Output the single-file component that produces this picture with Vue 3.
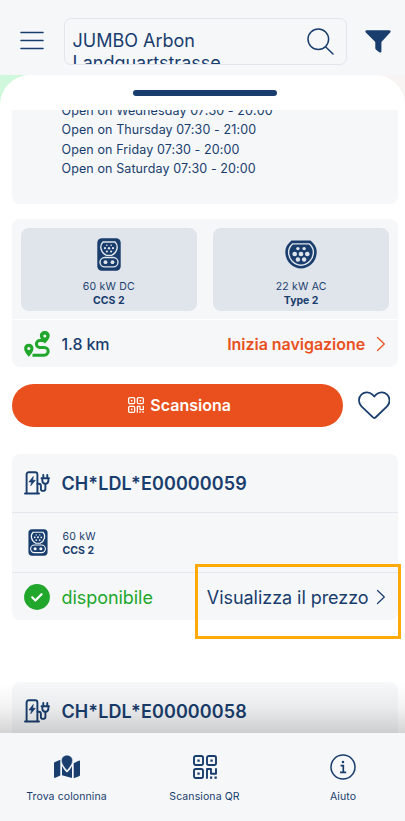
<template>
  <div class="app">
    <svg class="sprite" aria-hidden="true">
      <symbol id="ccs" viewBox="0 0 24 33">
        <rect x="0.3" y="0.3" width="23.400" height="32.400" rx="4.500" fill="#193d6d" />
        <path d="M6 4h12c2 2 2.600 4.500 1.900 7-.7 2.800-2.400 5-5.300 6.400H9.400C6.500 16 4.800 13.800 4.100 11 3.400 8.500 4 6 6 4z" fill="none" stroke="var(--cut)" stroke-width="1.400" />
        <rect x="3" y="19.500" width="18" height="9.400" rx="4.700" fill="none" stroke="var(--cut)" stroke-width="1.400" />
        <g fill="var(--cut)">
          <circle cx="9.800" cy="7.200" r=".8" /><circle cx="14.200" cy="7.200" r=".8" />
          <circle cx="8" cy="10.200" r="1.100" /><circle cx="12" cy="10.200" r="1.200" /><circle cx="16" cy="10.200" r="1.100" />
          <circle cx="9.900" cy="13.500" r="1.100" /><circle cx="14.100" cy="13.500" r="1.100" />
          <circle cx="8.500" cy="24.200" r="1.900" /><circle cx="15.500" cy="24.200" r="1.900" />
        </g>
      </symbol>
      <symbol id="type2" viewBox="0 0 32 29">
        <path d="M6.500.6h19c3.500 3 6.200 6.800 6.200 11.400C31.700 21 24.600 28.500 16 28.500S.3 21 .3 12C.3 7.400 3 3.600 6.500.6z" fill="#193d6d" />
        <path d="M7.500 3.900h17c2.300 2.200 3.900 5 3.900 8.100 0 7.200-5.500 13.200-12.400 13.200S3.600 19.200 3.600 12c0-3.100 1.600-5.900 3.900-8.100z" fill="none" stroke="var(--cut)" stroke-width="1.400" />
        <g fill="var(--cut)">
          <circle cx="12.900" cy="8.600" r="1.700" /><circle cx="19.100" cy="8.600" r="1.700" />
          <circle cx="9.700" cy="14" r="2.300" /><circle cx="16" cy="14" r="2.300" /><circle cx="22.300" cy="14" r="2.300" />
          <circle cx="12.900" cy="19.500" r="2.200" /><circle cx="19.100" cy="19.500" r="2.200" />
        </g>
      </symbol>
      <symbol id="station" viewBox="0 0 26 24">
        <g fill="none" stroke="currentColor" stroke-width="1.900" stroke-linecap="round" stroke-linejoin="round">
          <path d="M1 22.500h14M2.600 22V3.500c0-1.400.8-2.200 2.200-2.200h6.400c1.400 0 2.200.8 2.200 2.200V22" />
          <path d="M13.500 12.700h1.300c1.400 0 2.100.8 2.100 2.200v2.800c0 1.400.8 2.200 2 2.200s2.500-.8 2.500-2.200v-4.500" />
          <path d="M17.500 7.300h7.500M18.300 7.500v1.800c0 2.200 1.200 3.500 3.100 3.500s3-1.300 3-3.500V7.500M19.300 6.500V4M23.300 6.500V4" />
        </g>
        <path d="M9.300 5.400 4.900 11h2.700l-.9 3.800 4.700-5.500H8.700z" fill="currentColor" stroke="currentColor" stroke-width=".6" />
      </symbol>
      <symbol id="qr" viewBox="0 0 24 24">
        <g fill="none" stroke="currentColor" stroke-width="1.900" stroke-linejoin="round">
          <rect x="1" y="1" width="9" height="9" rx="1.800" />
          <rect x="14" y="1" width="9" height="9" rx="1.800" />
          <rect x="1" y="14" width="9" height="9" rx="1.800" />
          <path d="M14 23.800V14h4v4.800h5V13.200" />
        </g>
        <path d="M4.400 4.400h2.300v2.300H4.400zM17.400 4.400h2.300v2.300h-2.300zM4.400 17.400h2.300v2.300H4.400zM17 21.500h2.200v2.200H17zM21.500 21.500h2.300v2.200h-2.300z" fill="currentColor" />
      </symbol>
      <symbol id="chevron" viewBox="0 0 10 16">
        <path d="M1.500 1.500 8.300 8l-6.800 6.500" fill="none" stroke="currentColor" stroke-width="1.200" stroke-linecap="round" stroke-linejoin="round" />
      </symbol>
    </svg>

    <header class="topbar">
      <svg class="menu" viewBox="0 0 24 20">
        <path d="M1 1.500h22M1 9.500h22M1 17.500h22" fill="none" stroke="currentColor" stroke-width="1.500" stroke-linecap="round" />
      </svg>
      <div class="search">
        <div class="query"><span>JUMBO Arbon</span><br><span>Landquartstrasse</span></div>
        <svg class="lens" viewBox="0 0 28 28">
          <path d="M18.300 18.500 26 26M21.600 11.300a10.300 10.300 0 1 1-20.600 0 10.300 10.300 0 0 1 20.600 0z" fill="none" stroke="currentColor" stroke-width="1.500" stroke-linecap="round" />
        </svg>
      </div>
      <svg class="filter" viewBox="0 0 26 23">
        <path d="M1.700.3h22.600c1.300 0 1.700 1.200.9 2.100L16.400 12v9.300c0 1.200-1.100 1.700-2.100 1l-3.200-2.500c-.6-.4-.8-.8-.8-1.500V12L.8 2.400C0 1.500.4.300 1.700.3z" fill="currentColor" />
      </svg>
    </header>

    <main class="sheet">
      <div class="grip"><i></i></div>
      <div class="scroll">
        <section class="card hours">
          <p v-for="h in hours" :key="h">{{ h }}</p>
        </section>

        <section class="card plugs">
          <div class="tiles">
            <div v-for="p in plugs" :key="p.name" class="tile">
              <svg :class="p.icon"><use :href="'#' + p.icon" /></svg>
              <span class="power">{{ p.power }}</span>
              <b>{{ p.name }}</b>
            </div>
          </div>
          <div class="route">
            <svg class="route-icon" viewBox="0 0 26 26">
              <path d="M8.500 24.200h11.800a3.900 3.900 0 0 0 0-7.800h-4.500a3.400 3.400 0 0 1 0-6.800H20" fill="none" stroke="currentColor" stroke-width="3" />
              <path d="M4.800 12.700c2.700 0 4.700 2 4.700 4.600 0 2.900-2.200 5.700-4.700 8.500C2.300 23 .1 20.200.1 17.300c0-2.600 2-4.600 4.700-4.600zM20.800.1c2.800 0 4.900 2.100 4.900 4.700 0 2.800-2.400 5.200-4.900 7.800-2.500-2.600-4.900-5-4.900-7.800C15.900 2.200 18 .1 20.800.1z" fill="currentColor" />
              <circle cx="4.800" cy="17.400" r="1.500" fill="#f5f7f9" />
              <circle cx="20.800" cy="4.900" r="1.500" fill="#f5f7f9" />
            </svg>
            <span class="distance">1.8 km</span>
            <a class="navigate">Inizia navigazione</a>
            <svg class="chevron orange"><use href="#chevron" /></svg>
          </div>
        </section>

        <div class="actions">
          <button class="scan">
            <svg><use href="#qr" /></svg>
            <span>Scansiona</span>
          </button>
          <svg class="heart" viewBox="0 0 33 29">
            <path d="M16.500 27.500c-.6 0-1-.3-1.500-.8L3.500 15.600C-.1 12 .2 6.500 3.600 3.400 6.800.5 11.700.8 14.700 3.800l1.800 1.800 1.800-1.800c3-3 7.900-3.300 11.100-.4 3.400 3.100 3.700 8.600.1 12.200L18 26.700c-.5.500-.9.800-1.500.8z" fill="none" stroke="currentColor" stroke-width="1.800" />
          </svg>
        </div>

        <section class="card station first">
          <div class="head">
            <svg><use href="#station" /></svg>
            <h2>CH*LDL*E00000059</h2>
          </div>
          <div class="connector">
            <svg><use href="#ccs" /></svg>
            <div>
              <span class="power">60 kW</span>
              <b>CCS 2</b>
            </div>
          </div>
          <div class="status">
            <svg class="ok" viewBox="0 0 26 26">
              <circle cx="13" cy="13" r="12.900" fill="#21a72b" />
              <path d="m8.200 13.300 3.200 3.200 6.200-6.300" fill="none" stroke="#fff" stroke-width="2.200" stroke-linecap="round" stroke-linejoin="round" />
            </svg>
            <span class="available">disponibile</span>
            <a class="price">Visualizza il prezzo</a>
            <svg class="chevron"><use href="#chevron" /></svg>
            <i class="marker"></i>
          </div>
        </section>

        <section class="card station">
          <div class="head">
            <svg><use href="#station" /></svg>
            <h2>CH*LDL*E00000058</h2>
          </div>
        </section>
      </div>
      <div class="fade"></div>
    </main>

    <nav class="tabs">
      <a class="tab map">
        <svg viewBox="0 0 26 24">
          <path d="M0 8.500c0-.8.300-1.200 1-1.500l5.300-2.200v15.700L1.300 22.800C.6 23.100 0 22.700 0 22zM8 11c1.500 3 3 5 5 6.500 2-1.500 3.700-3.500 5-6.500v12l-10-2.700zM19.700 8.200l5-2.500c.7-.3 1.300 0 1.300.8v13.200c0 .8-.3 1.200-1 1.500l-5.300 2.100z" fill="currentColor" />
          <path d="M13 .3c3.200 0 5.500 2.300 5.500 5.400 0 3.200-2.800 6.800-5.500 9.800-2.700-3-5.500-6.600-5.500-9.800C7.500 2.600 9.800.3 13 .3z" fill="currentColor" stroke="#f5f7f9" stroke-width=".4" />
        </svg>
        <span>Trova colonnina</span>
      </a>
      <a class="tab qr">
        <svg><use href="#qr" /></svg>
        <span>Scansiona QR</span>
      </a>
      <a class="tab help">
        <svg viewBox="0 0 26 26">
          <circle cx="13" cy="13" r="12" fill="none" stroke="currentColor" stroke-width="1.500" />
          <path d="M10.600 11.600h2.700v6.500M10 18.300h6.200" fill="none" stroke="currentColor" stroke-width="1.700" />
          <circle cx="13" cy="8" r="1.250" fill="currentColor" />
        </svg>
        <span>Aiuto</span>
      </a>
    </nav>
  </div>
</template>

<script setup>
const hours = [
  'Open on Wednesday 07:30 - 20:00',
  'Open on Thursday 07:30 - 21:00',
  'Open on Friday 07:30 - 20:00',
  'Open on Saturday 07:30 - 20:00'
]

const plugs = [
  { icon: 'ccs', power: '60 kW DC', name: 'CCS 2' },
  { icon: 'type2', power: '22 kW AC', name: 'Type 2' }
]
</script>

<style>
body {
  margin: 0;
  overflow: hidden;
}
</style>

<style scoped>
* {
  box-sizing: border-box;
}
.app {
  --cut: #f5f7f9;
  display: flex;
  flex-direction: column;
  width: 405px;
  height: 821px;
  overflow: hidden;
  color: #193d6d;
  background: linear-gradient(90deg, #cff8dc 50%, #f8f4f4 50%);
  font-family: Inter, 'Liberation Sans', sans-serif;
}
svg {
  flex: none;
  display: block;
}
.sprite {
  position: absolute;
  width: 0;
  height: 0;
}
.topbar {
  display: flex;
  align-items: flex-start;
  flex: none;
  height: 75px;
  padding-left: 20px;
  background: #f5f7f9;
}
.menu {
  width: 24px;
  height: 20px;
  margin-top: 31px;
}
.search {
  display: flex;
  justify-content: space-between;
  width: 283px;
  height: 47px;
  margin: 18px 0 0 19.500px;
  padding: 11px 11px 0 8px;
  border: 1.500px solid #e2e6ec;
  border-radius: 7px;
  overflow: hidden;
}
.query {
  font-size: 18px;
  line-height: 21.500px;
  letter-spacing: 0;
  white-space: nowrap;
}
.lens {
  width: 28px;
  height: 28px;
  margin-top: -2.500px;
}
.filter {
  width: 26px;
  height: 23px;
  margin: 29.500px 0 0 18.500px;
}
.sheet {
  position: relative;
  display: flex;
  flex-direction: column;
  height: 658px;
  background: #fff;
  border-radius: 30px 30px 0 0;
  overflow: hidden;
}
.grip {
  display: flex;
  justify-content: center;
  flex: none;
  height: 35px;
  padding-top: 15px;
}
.grip i {
  width: 144px;
  height: 5.500px;
  margin-left: 5px;
  border-radius: 3px;
  background: #193d6d;
}
.scroll {
  flex: 1;
  padding: 0 7.600px 0 12.400px;
  overflow: hidden;
}
.card {
  width: 385.200px;
  border-radius: 8px;
  background: #f5f7f9;
}
.hours {
  height: 94px;
  padding-left: 49.100px;
  border-radius: 0 0 8px 8px;
  overflow: hidden;
}
.hours p {
  margin: 0;
  font-size: 12.500px;
  line-height: 19.200px;
  letter-spacing: 0.11px;
}
.hours p:first-child {
  margin-top: -8.900px;
}
.plugs {
  height: 148px;
  margin-top: 15px;
}
.tiles {
  display: flex;
  gap: 16.500px;
  height: 101px;
  padding: 8.500px 8.500px 0;
  border-bottom: 1.500px solid #fff;
}
.tile {
  --cut: #e0e5eb;
  display: flex;
  flex-direction: column;
  align-items: center;
  flex: 1;
  height: 83.500px;
  border-radius: 8px;
  background: #e0e5eb;
}
.tile svg {
  height: 33px;
  margin-top: 10.500px;
  margin-bottom: 8.500px;
}
.tile .ccs {
  width: 24px;
}
.tile .type2 {
  width: 32px;
  height: 29px;
  margin-top: 12px;
  margin-bottom: 11px;
}
.power {
  display: block;
  font-size: 10.500px;
  line-height: 14.500px;
  letter-spacing: 0.2px;
}
b {
  display: block;
  font-size: 10.500px;
  font-weight: 700;
  line-height: 14.500px;
}
.route,
.status {
  display: flex;
  align-items: center;
  height: 47px;
  padding: 0 12px 0 11.600px;
}
.route-icon {
  width: 26px;
  height: 26px;
  color: #21a72b;
}
.distance {
  margin-left: 11.500px;
  font-size: 16px;
  font-weight: 500;
  letter-spacing: -0.1px;
}
.navigate {
  margin-left: auto;
  color: #e9501d;
  font-size: 16px;
  font-weight: 600;
  letter-spacing: -0.04px;
}
.chevron {
  width: 10px;
  height: 16px;
  margin-left: 10.500px;
}
.orange {
  color: #e9501d;
}
.actions {
  display: flex;
  align-items: center;
  gap: 14.500px;
  margin-top: 17px;
}
.scan {
  display: flex;
  align-items: center;
  justify-content: center;
  gap: 6.500px;
  width: 331px;
  height: 43px;
  padding: 0 0 1px 3px;
  border: 0;
  border-radius: 22px;
  background: #e9501d;
  color: #fff;
  font: 600 16px Inter, sans-serif;
}
.scan svg {
  width: 16px;
  height: 16px;
}
.heart {
  width: 32.500px;
  height: 28.500px;
}
.station {
  height: 165.500px;
  margin-top: 62px;
}
.first {
  margin-top: 27px;
}
.head {
  display: flex;
  align-items: center;
  height: 58px;
  padding-left: 11.600px;
}
.head svg {
  width: 26px;
  height: 24px;
}
h2 {
  margin: 0 0 0 11.500px;
  padding-top: 1px;
  font-size: 18px;
  font-weight: 600;
  letter-spacing: 0.1px;
}
.connector {
  display: flex;
  align-items: center;
  height: 61px;
  padding-left: 15.200px;
  border-top: 1.500px solid #e3e8ee;
  border-bottom: 1.500px solid #e3e8ee;
}
.connector > div {
  padding-top: 3.500px;
}
.connector svg {
  width: 20px;
  height: 27px;
  margin-right: 15px;
}
.status {
  position: relative;
}
.ok {
  width: 26px;
  height: 26px;
}
.available {
  margin-left: 11.500px;
  padding-top: 1px;
  color: #21a72b;
  font-size: 18px;
  letter-spacing: -0.05px;
}
.price {
  margin-left: auto;
  padding-top: 1px;
  font-size: 18px;
  letter-spacing: -0.05px;
}
.status .chevron {
  margin-left: 7px;
}
/* highlight frame laid over the price link */
.marker {
  position: absolute;
  top: -9.500px;
  left: 183px;
  width: 206px;
  height: 75px;
  border: 3px solid #ffaa08;
}
.fade {
  position: absolute;
  left: 0;
  right: 0;
  bottom: 0;
  height: 50px;
  background: linear-gradient(rgba(0, 0, 0, 0), rgba(0, 0, 0, 0.05) 50%, rgba(0, 0, 0, 0.17));
}
.tabs {
  display: flex;
  flex: none;
  height: 88px;
  background: #f5f7f9;
}
.tab {
  display: flex;
  flex-direction: column;
  align-items: center;
  justify-content: space-between;
  flex: none;
  height: 71px;
  padding-top: 21.500px;
  font-size: 10.500px;
  line-height: 14px;
  letter-spacing: 0.1px;
}
.tab.map {
  width: 133px;
}
.tab.map svg {
  width: 26px;
  height: 24px;
}
.tab.qr {
  width: 143px;
}
.tab.qr svg {
  width: 24px;
  height: 24px;
}
.tab.help {
  width: 134px;
  padding-top: 20.500px;
}
.tab.help svg {
  width: 26px;
  height: 26px;
}
</style>
